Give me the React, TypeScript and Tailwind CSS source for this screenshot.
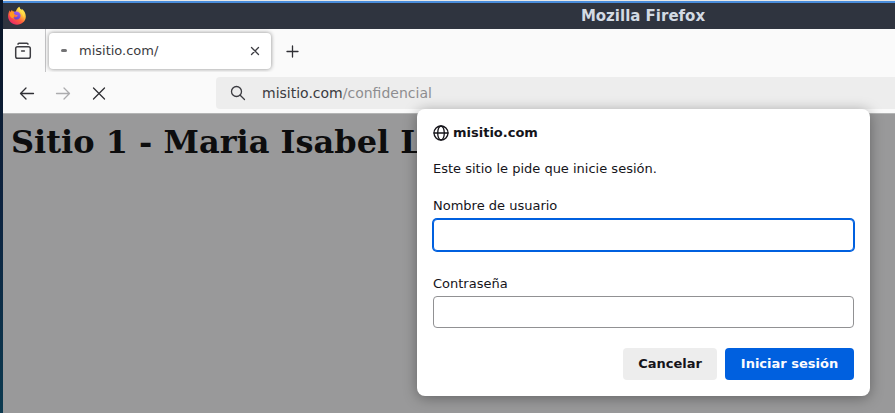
import React from "react";

function FirefoxLogo() {
  return (
    <svg width="20" height="20" viewBox="0 0 20 20" aria-hidden="true">
      <defs>
        <linearGradient id="flame" x1="0.85" y1="0.1" x2="0.2" y2="0.95">
          <stop offset="0" stopColor="#fff05a" />
          <stop offset="0.3" stopColor="#ffc23a" />
          <stop offset="0.6" stopColor="#ff5f3a" />
          <stop offset="1" stopColor="#e8256a" />
        </linearGradient>
        <linearGradient id="globe" x1="0.6" y1="0" x2="0.3" y2="1">
          <stop offset="0" stopColor="#a15cf5" />
          <stop offset="1" stopColor="#5b45cf" />
        </linearGradient>
      </defs>
      <path
        fill="url(#flame)"
        d="M12.3.8c.2 1.300 1 2.200 2.200 3.200.2-.4.3-.8.2-1.200 2.500 1.700 4.100 4.500 4.100 7.800 0 4.700-3.900 8.200-8.800 8.200s-8.900-3.700-8.900-8.500c0-2.700.8-4.600 1.700-6.100.1.800.3 1.200.6 1.700.5-.9 1-1.500 1.700-2 .1.700.3 1.200.7 1.600 1.100-.2 2.100.1 3 .6.400-2.100 1.500-4.200 3.500-5.300z"
      />
      <path fill="#ff9a20" d="M2.400 8.200c.9-2.300 2.500-2.900 4.300-2.500.6 1 1.700 1.400 3.100 1.700-.8 1.100-2.100 1.200-2.600 2-.6 1 .1 2.400 1.200 3-3 .5-5.500-1.200-6-4.200z" />
      <path
        fill="url(#globe)"
        d="M8 5.600c3-.7 5.600 1.100 5.600 4 0 2.400-1.800 4-4 4-1.600 0-2.900-1.100-3.100-2.600.8.500 2.200.5 2.900-.1.700-.5 1-.8 1.500-.9-.1-.7-.8-1.100-1.700-1.100-1.100-.1-2-.5-2.300-1.300-.2-.8.300-1.500 1.100-2z"
      />
      <path fill="#ffe14a" d="M12.300.8c.2 2 1.900 2.900 3.100 4.400 1.500 1.900 1.700 4 1.200 6-.6-3.300-2.800-5-4.700-6.700-.4-1.200-.2-2.600.4-3.700z" />
    </svg>
  );
}

function Icon({ className = "", children }: { className?: string; children: React.ReactNode }) {
  return (
    <svg
      width="16"
      height="16"
      viewBox="0 0 16 16"
      fill="none"
      stroke="currentColor"
      strokeWidth="1.3"
      strokeLinecap="round"
      strokeLinejoin="round"
      className={className}
      aria-hidden="true"
    >
      {children}
    </svg>
  );
}

function TitleBar() {
  return (
    <header className="flex h-[26px] items-center bg-[#2f343f] pl-1">
      <FirefoxLogo />
      <div className="flex-1 pl-[364px] text-center text-[15px] leading-5 font-bold text-[#d3dae3]">Mozilla Firefox</div>
    </header>
  );
}

function TabStrip() {
  return (
    <div className="flex h-[43px] items-center bg-[#fafafa]">
      <button aria-label="Vista de Firefox" className="flex h-full w-[43px] items-center justify-center border-r border-[#c4c4c6] pr-0.5 text-[#3d3d42]">
        <svg width="18" height="18" viewBox="0 0 18 18" fill="none" stroke="currentColor" strokeWidth="1.5" strokeLinecap="round" aria-hidden="true">
          <path d="M4 2.200q.1-.9 1-.9h8q.9 0 1 .9" />
          <rect x="1.7" y="4.8" width="14.6" height="11.4" rx="1.8" />
          <path d="M7.600 9h2.800" />
        </svg>
      </button>
      <div className="ml-[3px] flex h-9 w-[222px] items-center rounded bg-white pr-2 pl-3 shadow-[0_0_4px_rgba(0,0,0,0.45)]">
        <span className="h-[3px] w-[6px] rounded-full bg-[#737375]" />
        <span className="flex-1 pl-3 text-[13px] text-[#3b3b40]">misitio.com/</span>
        <button aria-label="Cerrar pestaña" className="flex size-4 items-center justify-center text-[#3d3d42]">
          <Icon>
            <path d="M4.500 4.500l7 7M11.500 4.500l-7 7" />
          </Icon>
        </button>
      </div>
      <button aria-label="Nueva pestaña" className="ml-[13px] flex size-4 items-center justify-center text-[#2f2f34]">
        <Icon>
          <path d="M8.500 3v11M3 8.500h11" />
        </Icon>
      </button>
    </div>
  );
}

function NavBar() {
  return (
    <div className="flex h-[42px] items-center border-b border-[#b4b5b5] bg-[#fafafa]">
      <div className="flex w-[213px] gap-5 pl-4">
        <button aria-label="Atrás" className="text-[#2f2f34]">
          <Icon>
            <path d="M14.500 8.500h-13M7 3L1.500 8.500 7 14" />
          </Icon>
        </button>
        <button aria-label="Adelante" className="text-[#acacae]">
          <Icon>
            <path d="M1.500 8.500h13M9 3l5.500 5.500L9 14" />
          </Icon>
        </button>
        <button aria-label="Detener" className="text-[#2f2f34]">
          <Icon>
            <path d="M2.500 3l11 11M13.500 3l-11 11" />
          </Icon>
        </button>
      </div>
      <div className="flex h-8 flex-1 items-center gap-4 rounded-l bg-[#ededed] pl-[14px] text-[14px] leading-5 text-[#3b3b40]">
        <Icon>
          <circle cx="6.5" cy="6.5" r="5" />
          <path d="M10.200 10.200l4.300 4.300" />
        </Icon>
        <span>
          misitio.com<span className="text-[#8d8d90]">/confidencial</span>
        </span>
      </div>
    </div>
  );
}

function LoginDialog() {
  return (
    <form
      role="dialog"
      aria-label="Iniciar sesión"
      onSubmit={(e) => e.preventDefault()}
      className="absolute top-[109px] right-[25px] w-[453px] rounded-lg bg-white p-4 pt-[15px] text-[13px] leading-[18px] text-[#15141a] shadow-[0_2px_14px_rgba(0,0,0,0.35)]"
    >
      <div className="flex items-center gap-1 font-bold">
        <Icon className="shrink-0">
          <circle cx="8" cy="8" r="7" />
          <ellipse cx="8" cy="8" rx="3.3" ry="7" />
          <path d="M1 8h14" />
        </Icon>
        misitio.com
      </div>
      <p className="mt-[18px]">Este sitio le pide que inicie sesión.</p>
      <label htmlFor="user" className="mt-[19px] block">Nombre de usuario</label>
      <input id="user" type="text" className="mt-1 block h-8 w-full rounded border border-[#0060df] bg-white px-2 ring-1 ring-[#0060df] outline-none" />
      <label htmlFor="password" className="mt-6 block">Contraseña</label>
      <input id="password" type="password" className="mt-[3px] block h-8 w-full rounded border border-[#919193] bg-white px-2 outline-none" />
      <div className="mt-5 flex justify-end gap-2 font-bold">
        <button type="button" className="h-8 w-[94px] rounded bg-[#ededed]">Cancelar</button>
        <button type="submit" className="h-8 w-[129px] rounded bg-[#0060df] text-[#fbfbfe]">Iniciar sesión</button>
      </div>
    </form>
  );
}

export default function App() {
  return (
    <div className="relative flex min-h-screen overflow-hidden bg-linear-to-b from-[#0a1526] via-[#0c2340] to-[#0c3a50] pl-[3px] font-['DejaVu_Sans',sans-serif]">
      <div className="flex min-w-0 flex-1 flex-col border-t border-[#e8e8e8]">
        <div className="h-[2px] bg-[#4a8ddb]" />
        <TitleBar />
        <TabStrip />
        <NavBar />
        <main className="flex-1 overflow-hidden bg-[#99999a] px-2 pt-[9px]">
          <h1 className="font-['DejaVu_Serif',serif] text-[32px] leading-[38px] font-bold whitespace-nowrap text-[#0d0d0e]">
            Sitio 1 - Maria Isabel L
          </h1>
        </main>
      </div>
      <LoginDialog />
    </div>
  );
}
